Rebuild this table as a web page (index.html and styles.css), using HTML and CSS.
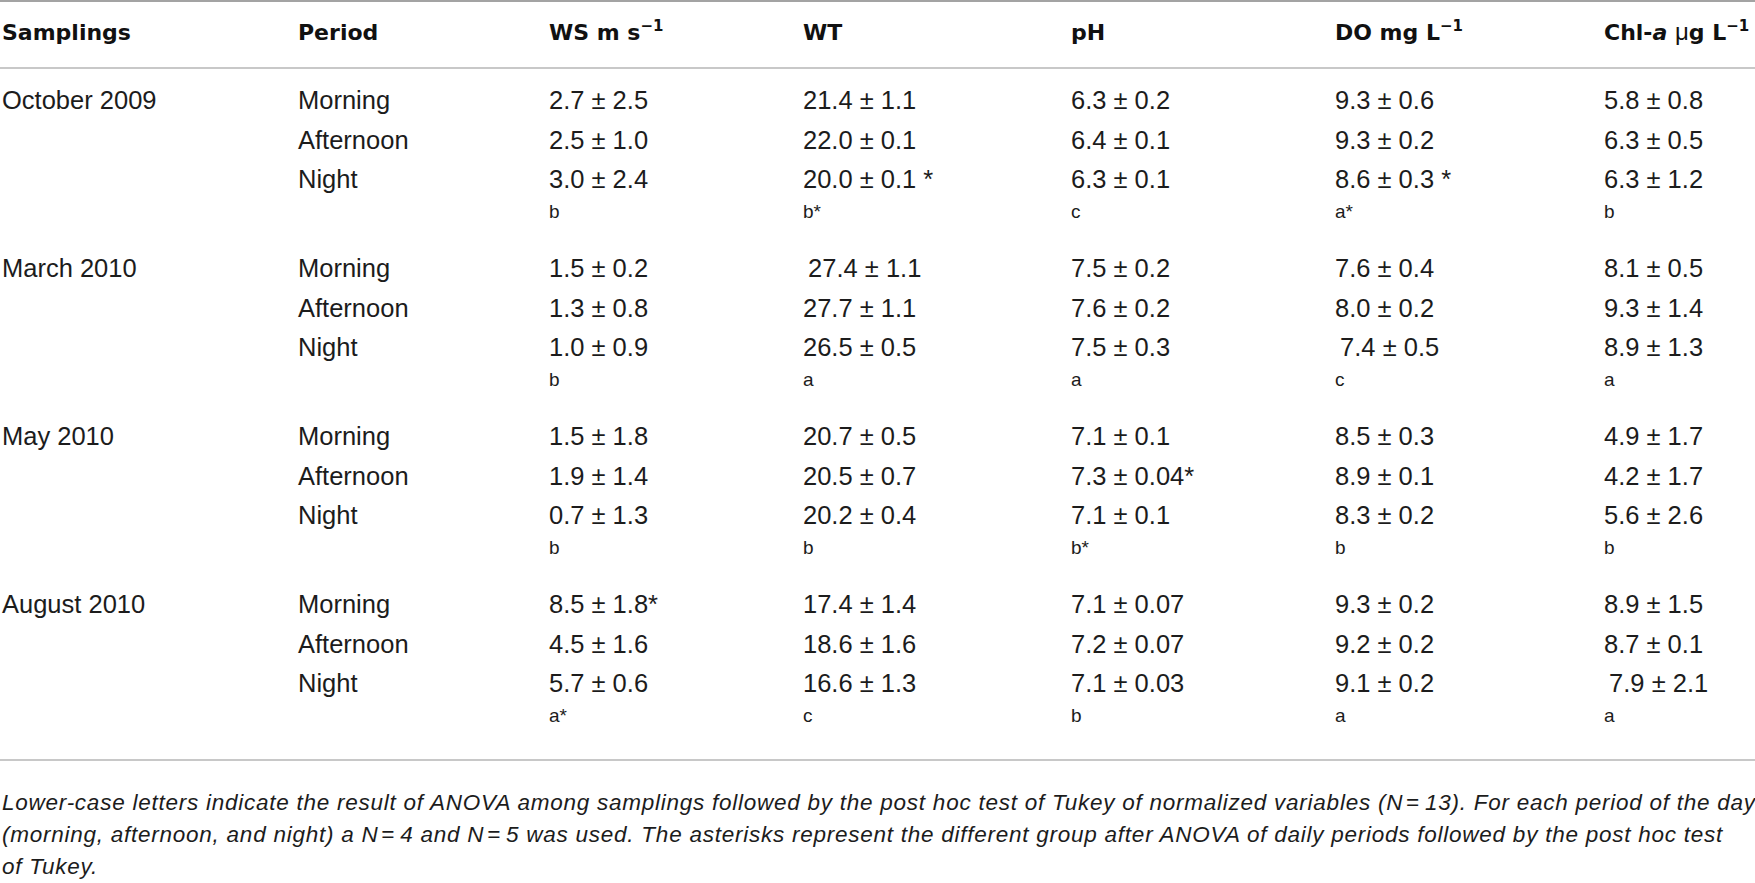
FILE: index.html
```html
<!DOCTYPE html>
<html lang="en">
<head>
    <meta charset="UTF-8">
    <meta name="viewport" content="width=device-width, initial-scale=1.0">
    <title>Water quality samplings</title>
    <link rel="stylesheet" href="styles.css">
</head>
<body>
    <table class="data">
        <colgroup>
            <col class="c-samp">
            <col class="c-period">
            <col class="c-ws">
            <col class="c-wt">
            <col class="c-ph">
            <col class="c-do">
            <col class="c-chl">
        </colgroup>
        <thead>
            <tr>
                <th>Samplings</th>
                <th>Period</th>
                <th>WS m s<sup>−1</sup></th>
                <th>WT</th>
                <th>pH</th>
                <th>DO mg L<sup>−1</sup></th>
                <th>Chl-<i>a</i> <span class="mu">μ</span>g L<sup>−1</sup></th>
            </tr>
        </thead>
        <tbody>
            <tr>
                <td>October 2009</td>
                <td>Morning</td>
                <td>2.7 ± 2.5</td>
                <td>21.4 ± 1.1</td>
                <td>6.3 ± 0.2</td>
                <td>9.3 ± 0.6</td>
                <td>5.8 ± 0.8</td>
            </tr>
            <tr>
                <td></td>
                <td>Afternoon</td>
                <td>2.5 ± 1.0</td>
                <td>22.0 ± 0.1</td>
                <td>6.4 ± 0.1</td>
                <td>9.3 ± 0.2</td>
                <td>6.3 ± 0.5</td>
            </tr>
            <tr>
                <td></td>
                <td>Night</td>
                <td>3.0 ± 2.4</td>
                <td>20.0 ± 0.1 *</td>
                <td>6.3 ± 0.1</td>
                <td>8.6 ± 0.3 *</td>
                <td>6.3 ± 1.2</td>
            </tr>
            <tr class="letters">
                <td></td>
                <td></td>
                <td>b</td>
                <td>b*</td>
                <td>c</td>
                <td>a*</td>
                <td>b</td>
            </tr>
        </tbody>
        <tbody>
            <tr>
                <td>March 2010</td>
                <td>Morning</td>
                <td>1.5 ± 0.2</td>
                <td>&thinsp;27.4 ± 1.1</td>
                <td>7.5 ± 0.2</td>
                <td>7.6 ± 0.4</td>
                <td>8.1 ± 0.5</td>
            </tr>
            <tr>
                <td></td>
                <td>Afternoon</td>
                <td>1.3 ± 0.8</td>
                <td>27.7 ± 1.1</td>
                <td>7.6 ± 0.2</td>
                <td>8.0 ± 0.2</td>
                <td>9.3 ± 1.4</td>
            </tr>
            <tr>
                <td></td>
                <td>Night</td>
                <td>1.0 ± 0.9</td>
                <td>26.5 ± 0.5</td>
                <td>7.5 ± 0.3</td>
                <td>&thinsp;7.4 ± 0.5</td>
                <td>8.9 ± 1.3</td>
            </tr>
            <tr class="letters">
                <td></td>
                <td></td>
                <td>b</td>
                <td>a</td>
                <td>a</td>
                <td>c</td>
                <td>a</td>
            </tr>
        </tbody>
        <tbody>
            <tr>
                <td>May 2010</td>
                <td>Morning</td>
                <td>1.5 ± 1.8</td>
                <td>20.7 ± 0.5</td>
                <td>7.1 ± 0.1</td>
                <td>8.5 ± 0.3</td>
                <td>4.9 ± 1.7</td>
            </tr>
            <tr>
                <td></td>
                <td>Afternoon</td>
                <td>1.9 ± 1.4</td>
                <td>20.5 ± 0.7</td>
                <td>7.3 ± 0.04*</td>
                <td>8.9 ± 0.1</td>
                <td>4.2 ± 1.7</td>
            </tr>
            <tr>
                <td></td>
                <td>Night</td>
                <td>0.7 ± 1.3</td>
                <td>20.2 ± 0.4</td>
                <td>7.1 ± 0.1</td>
                <td>8.3 ± 0.2</td>
                <td>5.6 ± 2.6</td>
            </tr>
            <tr class="letters">
                <td></td>
                <td></td>
                <td>b</td>
                <td>b</td>
                <td>b*</td>
                <td>b</td>
                <td>b</td>
            </tr>
        </tbody>
        <tbody>
            <tr>
                <td>August 2010</td>
                <td>Morning</td>
                <td>8.5 ± 1.8*</td>
                <td>17.4 ± 1.4</td>
                <td>7.1 ± 0.07</td>
                <td>9.3 ± 0.2</td>
                <td>8.9 ± 1.5</td>
            </tr>
            <tr>
                <td></td>
                <td>Afternoon</td>
                <td>4.5 ± 1.6</td>
                <td>18.6 ± 1.6</td>
                <td>7.2 ± 0.07</td>
                <td>9.2 ± 0.2</td>
                <td>8.7 ± 0.1</td>
            </tr>
            <tr>
                <td></td>
                <td>Night</td>
                <td>5.7 ± 0.6</td>
                <td>16.6 ± 1.3</td>
                <td>7.1 ± 0.03</td>
                <td>9.1 ± 0.2</td>
                <td>&thinsp;7.9 ± 2.1</td>
            </tr>
            <tr class="letters">
                <td></td>
                <td></td>
                <td>a*</td>
                <td>c</td>
                <td>b</td>
                <td>a</td>
                <td>a</td>
            </tr>
        </tbody>
    </table>

    <p class="note">Lower-case letters indicate the result of ANOVA among samplings followed by the post hoc test of Tukey of normalized variables (N&#8202;=&thinsp;13). For each period of the day<br>(morning, afternoon, and night) a N&#8202;=&thinsp;4 and N&#8202;=&thinsp;5 was used. The asterisks represent the different group after ANOVA of daily periods followed by the post hoc test<br>of Tukey.</p>
</body>
</html>
```

FILE: styles.css
```css
* {
    margin: 0;
    padding: 0;
}

body {
    background: #fff;
    color: #1c1c1c;
    font-family: "Liberation Sans", Arial, sans-serif;
}

.data {
    width: 1755px;
    table-layout: fixed;
    border-collapse: separate;
    border-spacing: 0;
    border-top: 2px solid #a3a3a3;
    border-bottom: 2px solid #c8c8c8;
}

.c-samp { width: 296px; }
.c-period { width: 251px; }
.c-ws { width: 254px; }
.c-wt { width: 268px; }
.c-ph { width: 264px; }
.c-do { width: 269px; }
.c-chl { width: 153px; }

th {
    font-family: "DejaVu Sans", sans-serif;
    font-weight: bold;
    font-size: 22px;
    line-height: 26px;
    text-align: left;
    white-space: nowrap;
    padding: 18px 0 21px 2px;
    border-bottom: 2px solid #c8c8c8;
    color: #111;
}

th sup {
    font-size: 15px;
    line-height: 0;
    vertical-align: 9px;
}

th .mu {
    font-family: "Liberation Sans", sans-serif;
    font-weight: normal;
    font-size: 24px;
    line-height: 0;
}

td {
    font-size: 25.5px;
    line-height: 39.5px;
    padding-left: 2px;
    white-space: nowrap;
    vertical-align: top;
}

thead + tbody tr:first-child td {
    padding-top: 12px;
}

.letters td {
    font-size: 19px;
    line-height: 23.5px;
    padding-bottom: 26px;
}

tbody:last-child .letters td {
    padding-bottom: 32px;
}

.note {
    margin-top: 26px;
    padding-left: 2px;
    font-style: italic;
    font-size: 22.5px;
    letter-spacing: 0.75px;
    line-height: 32px;
    white-space: nowrap;
}
```
